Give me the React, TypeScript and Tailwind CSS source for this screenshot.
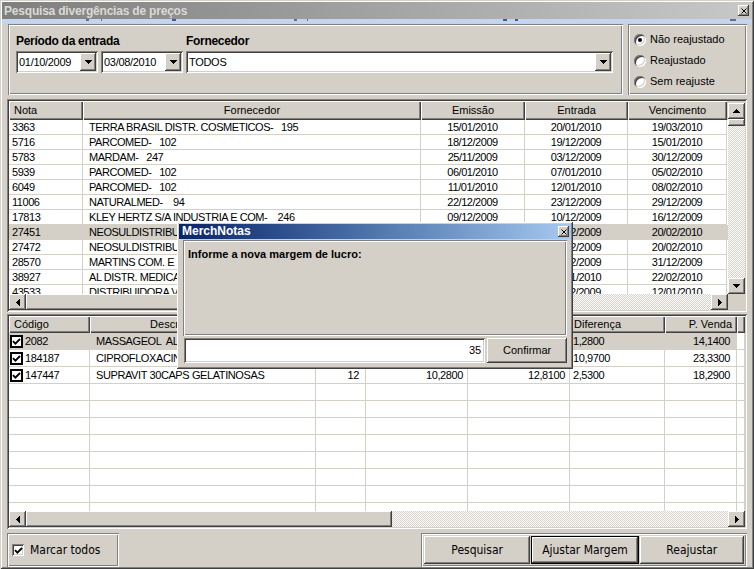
import React from 'react';

// classic 3D borders
const raised = 'shadow-[inset_-1px_-1px_#404040,inset_1px_1px_#ffffff,inset_-2px_-2px_#808080,inset_2px_2px_#d4d0c8]';
const sunken = 'shadow-[inset_1px_1px_#808080,inset_-1px_-1px_#ffffff,inset_2px_2px_#404040,inset_-2px_-2px_#d4d0c8]';
const etched = 'shadow-[inset_1px_1px_#808080,inset_-1px_-1px_#ffffff,inset_2px_2px_#ffffff,inset_-2px_-2px_#808080]';
const headCell = 'shadow-[inset_1px_1px_#ffffff,inset_-1px_-1px_#404040,inset_-2px_-2px_#808080]';
const hatch = 'bg-[image:repeating-conic-gradient(#d4d0c8_0%_25%,#ffffff_0%_50%)] bg-[length:2px_2px]';

type Dir = 'up' | 'down' | 'left' | 'right';

const Arrow = ({ dir }: { dir: Dir }) => {
  if (dir === 'up')
    return <svg width="7" height="4" viewBox="0 0 7 4" shapeRendering="crispEdges"><polygon points="3.5,0 7,4 0,4" fill="#000" /></svg>;
  if (dir === 'down')
    return <svg width="7" height="4" viewBox="0 0 7 4" shapeRendering="crispEdges"><polygon points="0,0 7,0 3.5,4" fill="#000" /></svg>;
  if (dir === 'left')
    return <svg width="4" height="7" viewBox="0 0 4 7" shapeRendering="crispEdges"><polygon points="4,0 4,7 0,3.5" fill="#000" /></svg>;
  return <svg width="4" height="7" viewBox="0 0 4 7" shapeRendering="crispEdges"><polygon points="0,0 0,7 4,3.5" fill="#000" /></svg>;
};

const SBtn = ({ dir }: { dir: Dir }) => (
  <div className={`w-[17px] h-[16px] shrink-0 bg-[#d4d0c8] ${raised} flex items-center justify-center`}>
    <Arrow dir={dir} />
  </div>
);

const Check = () => (
  <svg width="9" height="9" viewBox="0 0 9 9">
    <path d="M1 4.2 L3.4 6.6 L8 2" stroke="#000" strokeWidth="1.9" fill="none" />
  </svg>
);

const CloseBox = () => (
  <div className={`w-[11px] h-[11px] bg-[#d4d0c8] ${raised} flex items-center justify-center`}>
    <svg width="6" height="6" viewBox="0 0 6 6">
      <path d="M0.5 0.5 L5.5 5.5 M5.5 0.5 L0.5 5.5" stroke="#000" strokeWidth="1" />
    </svg>
  </div>
);

const Radio = ({ checked, label }: { checked?: boolean; label: string }) => (
  <div className="h-[21px] flex items-center gap-[4px]">
    <div className={`w-[12px] h-[12px] rounded-full bg-white ${sunken} flex items-center justify-center`}>
      {checked && <div className="w-[4px] h-[4px] rounded-full bg-black" />}
    </div>
    <span className="text-[11px] text-black">{label}</span>
  </div>
);

const Combo = ({ className, value }: { className: string; value: string }) => (
  <div className={`${className} h-[22px] bg-white ${sunken} p-[2px] flex items-center`}>
    <span className="flex-1 pl-[1px] text-[11px] leading-[14px] tracking-[-0.3px] text-black">{value}</span>
    <div className={`w-[16px] h-[18px] bg-[#d4d0c8] ${raised} flex items-center justify-center`}>
      <Arrow dir="down" />
    </div>
  </div>
);

const notas = [
  ['3363', 'TERRA BRASIL DISTR. COSMETICOS-   195', '15/01/2010', '20/01/2010', '19/03/2010'],
  ['5716', 'PARCOMED-   102', '18/12/2009', '19/12/2009', '15/01/2010'],
  ['5783', 'MARDAM-   247', '25/11/2009', '03/12/2009', '30/12/2009'],
  ['5939', 'PARCOMED-   102', '06/01/2010', '07/01/2010', '05/02/2010'],
  ['6049', 'PARCOMED-   102', '11/01/2010', '12/01/2010', '08/02/2010'],
  ['11006', 'NATURALMED-    94', '22/12/2009', '23/12/2009', '29/12/2009'],
  ['17813', 'KLEY HERTZ S/A INDUSTRIA E COM-    246', '09/12/2009', '10/12/2009', '16/12/2009'],
  ['27451', 'NEOSULDISTRIBUIDORA-   310', '21/12/2009', '22/12/2009', '20/02/2010'],
  ['27472', 'NEOSULDISTRIBUIDORA-   310', '21/12/2009', '22/12/2009', '20/02/2010'],
  ['28570', 'MARTINS COM. E SERVICOS-   88', '01/12/2009', '02/12/2009', '31/12/2009'],
  ['38927', 'AL DISTR. MEDICAMENTOS-   51', '20/01/2010', '21/01/2010', '22/02/2010'],
  ['43533', 'DISTRIBUIDORA VITORIA-   12', '10/12/2009', '11/12/2009', '12/01/2010'],
];

const itens = [
  ['2082', 'MASSAGEOL  ALCOOL 70%', '6', '9,4500', '10,7300', '1,2800', '14,1400'],
  ['184187', 'CIPROFLOXACINO 500MG', '10', '7,4200', '18,3900', '10,9700', '23,3300'],
  ['147447', 'SUPRAVIT 30CAPS GELATINOSAS', '12', '10,2800', '12,8100', '2,5300', '18,2900'],
];

const cell = 'h-full border-r border-b border-[#d4d0c8] px-[3px] overflow-hidden whitespace-pre shrink-0';

const TopGrid = () => (
  <div className={`h-[213px] ${sunken} p-[2px] flex flex-col shrink-0`}>
    <div className="flex flex-1 min-h-0">
      <div className="flex-1 flex flex-col bg-white overflow-hidden">
        <div className="flex h-[19px] shrink-0 bg-[#d4d0c8] leading-[19px]">
          <div className={`w-[74px] px-[5px] ${headCell}`}>Nota</div>
          <div className={`w-[338px] text-center ${headCell}`}>Fornecedor</div>
          <div className={`w-[104px] text-center ${headCell}`}>Emissão</div>
          <div className={`w-[103px] text-center ${headCell}`}>Entrada</div>
          <div className={`w-[99px] text-center ${headCell}`}>Vencimento</div>
        </div>
        {notas.map((n, i) => (
          <div key={n[0]} className={`flex h-[15px] shrink-0 leading-[15px] tracking-[-0.45px] ${i === 7 ? 'bg-[#d4d0c8]' : 'bg-white'}`}>
            <div className={`${cell} w-[74px]`}>{n[0]}</div>
            <div className={`${cell} w-[338px] pl-[6px]`}>{n[1]}</div>
            <div className={`${cell} w-[104px] text-center`}>{n[2]}</div>
            <div className={`${cell} w-[103px] text-center`}>{n[3]}</div>
            <div className={`${cell} w-[99px] text-center`}>{n[4]}</div>
          </div>
        ))}
      </div>
      <div className="w-[17px] flex flex-col shrink-0 pt-[2px]">
        <SBtn dir="up" />
        <div className={`h-[7px] bg-[#d4d0c8] ${raised}`} />
        <div className={`flex-1 ${hatch}`} />
        <SBtn dir="down" />
      </div>
    </div>
    <div className="flex h-[16px] shrink-0">
      <SBtn dir="left" />
      <div className={`w-[544px] bg-[#d4d0c8] ${raised}`} />
      <div className={`flex-1 ${hatch}`} />
      <SBtn dir="right" />
      <div className="w-[17px] bg-[#d4d0c8]" />
    </div>
  </div>
);

const BoxCheck = () => (
  <div className="w-[13px] h-[13px] border-2 border-black bg-white flex items-center justify-center shrink-0">
    <Check />
  </div>
);

const LowerGrid = () => (
  <div className={`mt-[2px] h-[215px] ${sunken} p-[2px] flex flex-col shrink-0`}>
    <div className="flex-1 flex flex-col bg-white overflow-hidden">
      <div className="flex h-[17px] shrink-0 bg-[#d4d0c8] leading-[17px]">
        <div className={`w-[81px] px-[5px] ${headCell}`}>Código</div>
        <div className={`w-[226px] text-center ${headCell}`}>Descrição do Produto</div>
        <div className={`w-[50px] text-center ${headCell}`}>Qtde</div>
        <div className={`w-[102px] text-center ${headCell}`}>Custo Anterior</div>
        <div className={`w-[102px] text-center ${headCell}`}>Custo Atual</div>
        <div className={`w-[95px] px-[4px] ${headCell}`}>Diferença</div>
        <div className={`w-[72px] px-[5px] text-right ${headCell}`}>P. Venda</div>
        <div className={`flex-1 ${headCell}`} />
      </div>
      {itens.map((r, i) => (
        <div key={r[0]} className={`flex h-[17px] shrink-0 leading-[16px] tracking-[-0.4px] ${i === 0 ? 'bg-[#d4d0c8]' : 'bg-white'}`}>
          <div className={`${cell} w-[81px] flex items-center gap-[2px] pl-[1px]`}>
            <BoxCheck />
            <span>{r[0]}</span>
          </div>
          <div className={`${cell} w-[226px] pl-[6px]`}>{r[1]}</div>
          <div className={`${cell} w-[50px] text-right pr-[6px]`}>{r[2]}</div>
          <div className={`${cell} w-[102px] text-right pr-[4px]`}>{r[3]}</div>
          <div className={`${cell} w-[102px] text-right pr-[4px]`}>{r[4]}</div>
          <div className={`${cell} w-[95px]`}>{r[5]}</div>
          <div className={`${cell} w-[72px] text-right pr-[6px]`}>{r[6]}</div>
          <div className={`${cell} flex-1 bg-white`} />
        </div>
      ))}
      {Array.from({ length: 8 }).map((_, i) => (
        <div key={i} className="flex h-[17px] shrink-0 bg-white">
          <div className={`${cell} w-[81px]`} />
          <div className={`${cell} w-[226px]`} />
          <div className={`${cell} w-[50px]`} />
          <div className={`${cell} w-[102px]`} />
          <div className={`${cell} w-[102px]`} />
          <div className={`${cell} w-[95px]`} />
          <div className={`${cell} w-[72px]`} />
          <div className={`${cell} flex-1`} />
        </div>
      ))}
    </div>
    <div className="flex h-[16px] shrink-0">
      <SBtn dir="left" />
      <div className={`w-[366px] bg-[#d4d0c8] ${raised}`} />
      <div className={`flex-1 ${hatch}`} />
      <SBtn dir="right" />
    </div>
  </div>
);

const Dialog = () => (
  <div className={`absolute left-[177px] top-[222px] w-[396px] h-[147px] bg-[#d4d0c8] ${raised} p-[2px] flex flex-col`}>
    <div className="h-[15px] bg-gradient-to-r from-[#0a246a] to-[#a6caf0] flex items-center justify-between pl-[3px] pr-[2px]">
      <span className="text-white font-bold text-[12px] leading-[15px]">MerchNotas</span>
      <CloseBox />
    </div>
    <div className="flex-1 flex flex-col px-[4px] pt-[1px]">
      <div className={`h-[96px] ${etched} pl-[5px] pt-[6px]`}>
        <span className="font-bold text-[11px] leading-[14px] text-black">Informe a nova margem de lucro:</span>
      </div>
      <div className="flex gap-[2px] mt-[2px] ml-[1px]">
        <div className={`w-[302px] h-[25px] bg-white ${sunken} flex items-center justify-end pr-[4px] text-[11px]`}>35</div>
        <div className={`w-[80px] h-[25px] bg-[#d4d0c8] ${raised} flex items-center justify-center text-[11px]`}>Confirmar</div>
      </div>
    </div>
  </div>
);

const App = () => {
  return (
    <div className="w-[754px] h-[569px] bg-[#d4d0c8] relative overflow-hidden font-['Liberation_Sans',Arial,sans-serif] text-[11px] text-black shadow-[inset_1px_1px_#d4d0c8,inset_-1px_-1px_#404040,inset_2px_2px_#ffffff,inset_-2px_-2px_#808080] pt-[2px] px-[2px] flex flex-col">
      {/* Title bar */}
      <div className="h-[17px] shrink-0 bg-gradient-to-r from-[#7f7f7f] to-[#c8c8c8] flex items-center justify-between pl-[2px] pr-[3px]">
        <span className="text-[#dcdad4] font-bold text-[12px] leading-[16px] tracking-[-0.2px]">Pesquisa divergências de preços</span>
        <CloseBox />
      </div>
      {/* strip */}
      <div className="h-[4px] shrink-0 bg-[#c3d6ee] flex items-start">
        <span className="ml-[84px] w-[3px] h-[2px] bg-[#5a6f9a]" />
        <span className="ml-[12px] w-[1px] h-[2px] bg-[#5a6f9a]" />
        <span className="ml-[70px] w-[4px] h-[2px] bg-[#3a59a8]" />
        <span className="ml-[118px] w-[3px] h-[2px] bg-[#5a6f9a]" />
        <span className="ml-[10px] w-[1px] h-[2px] bg-[#5a6f9a]" />
        <span className="ml-[195px] w-[4px] h-[2px] bg-[#3a59a8]" />
        <span className="ml-[8px] w-[3px] h-[2px] bg-[#3a59a8]" />
        <span className="ml-[212px] w-[6px] h-[2px] bg-[#5a6f9a]" />
      </div>
      <div className="flex-1 flex flex-col px-[5px]">
        {/* filters */}
        <div className="flex gap-[5px] mt-[1px] h-[71px] shrink-0">
          <div className={`ml-[1px] w-[615px] ${etched} pl-[8px] pt-[10px] flex gap-[3px]`}>
            <div className="flex flex-col">
              <span className="font-bold text-[12px] leading-[15px] h-[17px] tracking-[-0.3px]">Período da entrada</span>
              <div className="flex gap-[3px]">
                <Combo className="w-[82px]" value="01/10/2009" />
                <Combo className="w-[82px]" value="03/08/2010" />
              </div>
            </div>
            <div className="flex flex-col">
              <span className="font-bold text-[12px] leading-[15px] h-[17px] tracking-[-0.3px]">Fornecedor</span>
              <Combo className="w-[427px]" value="TODOS" />
            </div>
          </div>
          <div className={`w-[119px] ${etched} pl-[6px] pt-[5px] flex flex-col`}>
            <Radio checked label="Não reajustado" />
            <Radio label="Reajustado" />
            <Radio label="Sem reajuste" />
          </div>
        </div>
        <div className="mt-[4px]">
          <TopGrid />
        </div>
        <LowerGrid />
        {/* bottom bar */}
        <div className="mt-[4px] h-[34px] flex justify-between shrink-0">
          <div className={`w-[112px] ${etched} flex items-center pl-[5px] gap-[6px]`}>
            <div className={`w-[12px] h-[12px] bg-white ${sunken} flex items-center justify-center`}>
              <Check />
            </div>
            <span className="text-[12px] font-['DejaVu_Sans_Condensed','DejaVu_Sans',sans-serif]">Marcar todos</span>
          </div>
          <div className={`w-[326px] ${etched} flex items-center px-[3px] gap-[1px] font-['DejaVu_Sans_Condensed','DejaVu_Sans',sans-serif] text-[12px]`}>
            <div className={`w-[107px] h-[28px] ${raised} flex items-center justify-center`}>Pesquisar</div>
            <div className="w-[108px] h-[28px] border border-black">
              <div className={`w-full h-full ${raised} flex items-center justify-center`}>Ajustar Margem</div>
            </div>
            <div className={`w-[105px] h-[28px] ${raised} flex items-center justify-center`}>Reajustar</div>
          </div>
        </div>
      </div>
      <Dialog />
    </div>
  );
};

export default App;
